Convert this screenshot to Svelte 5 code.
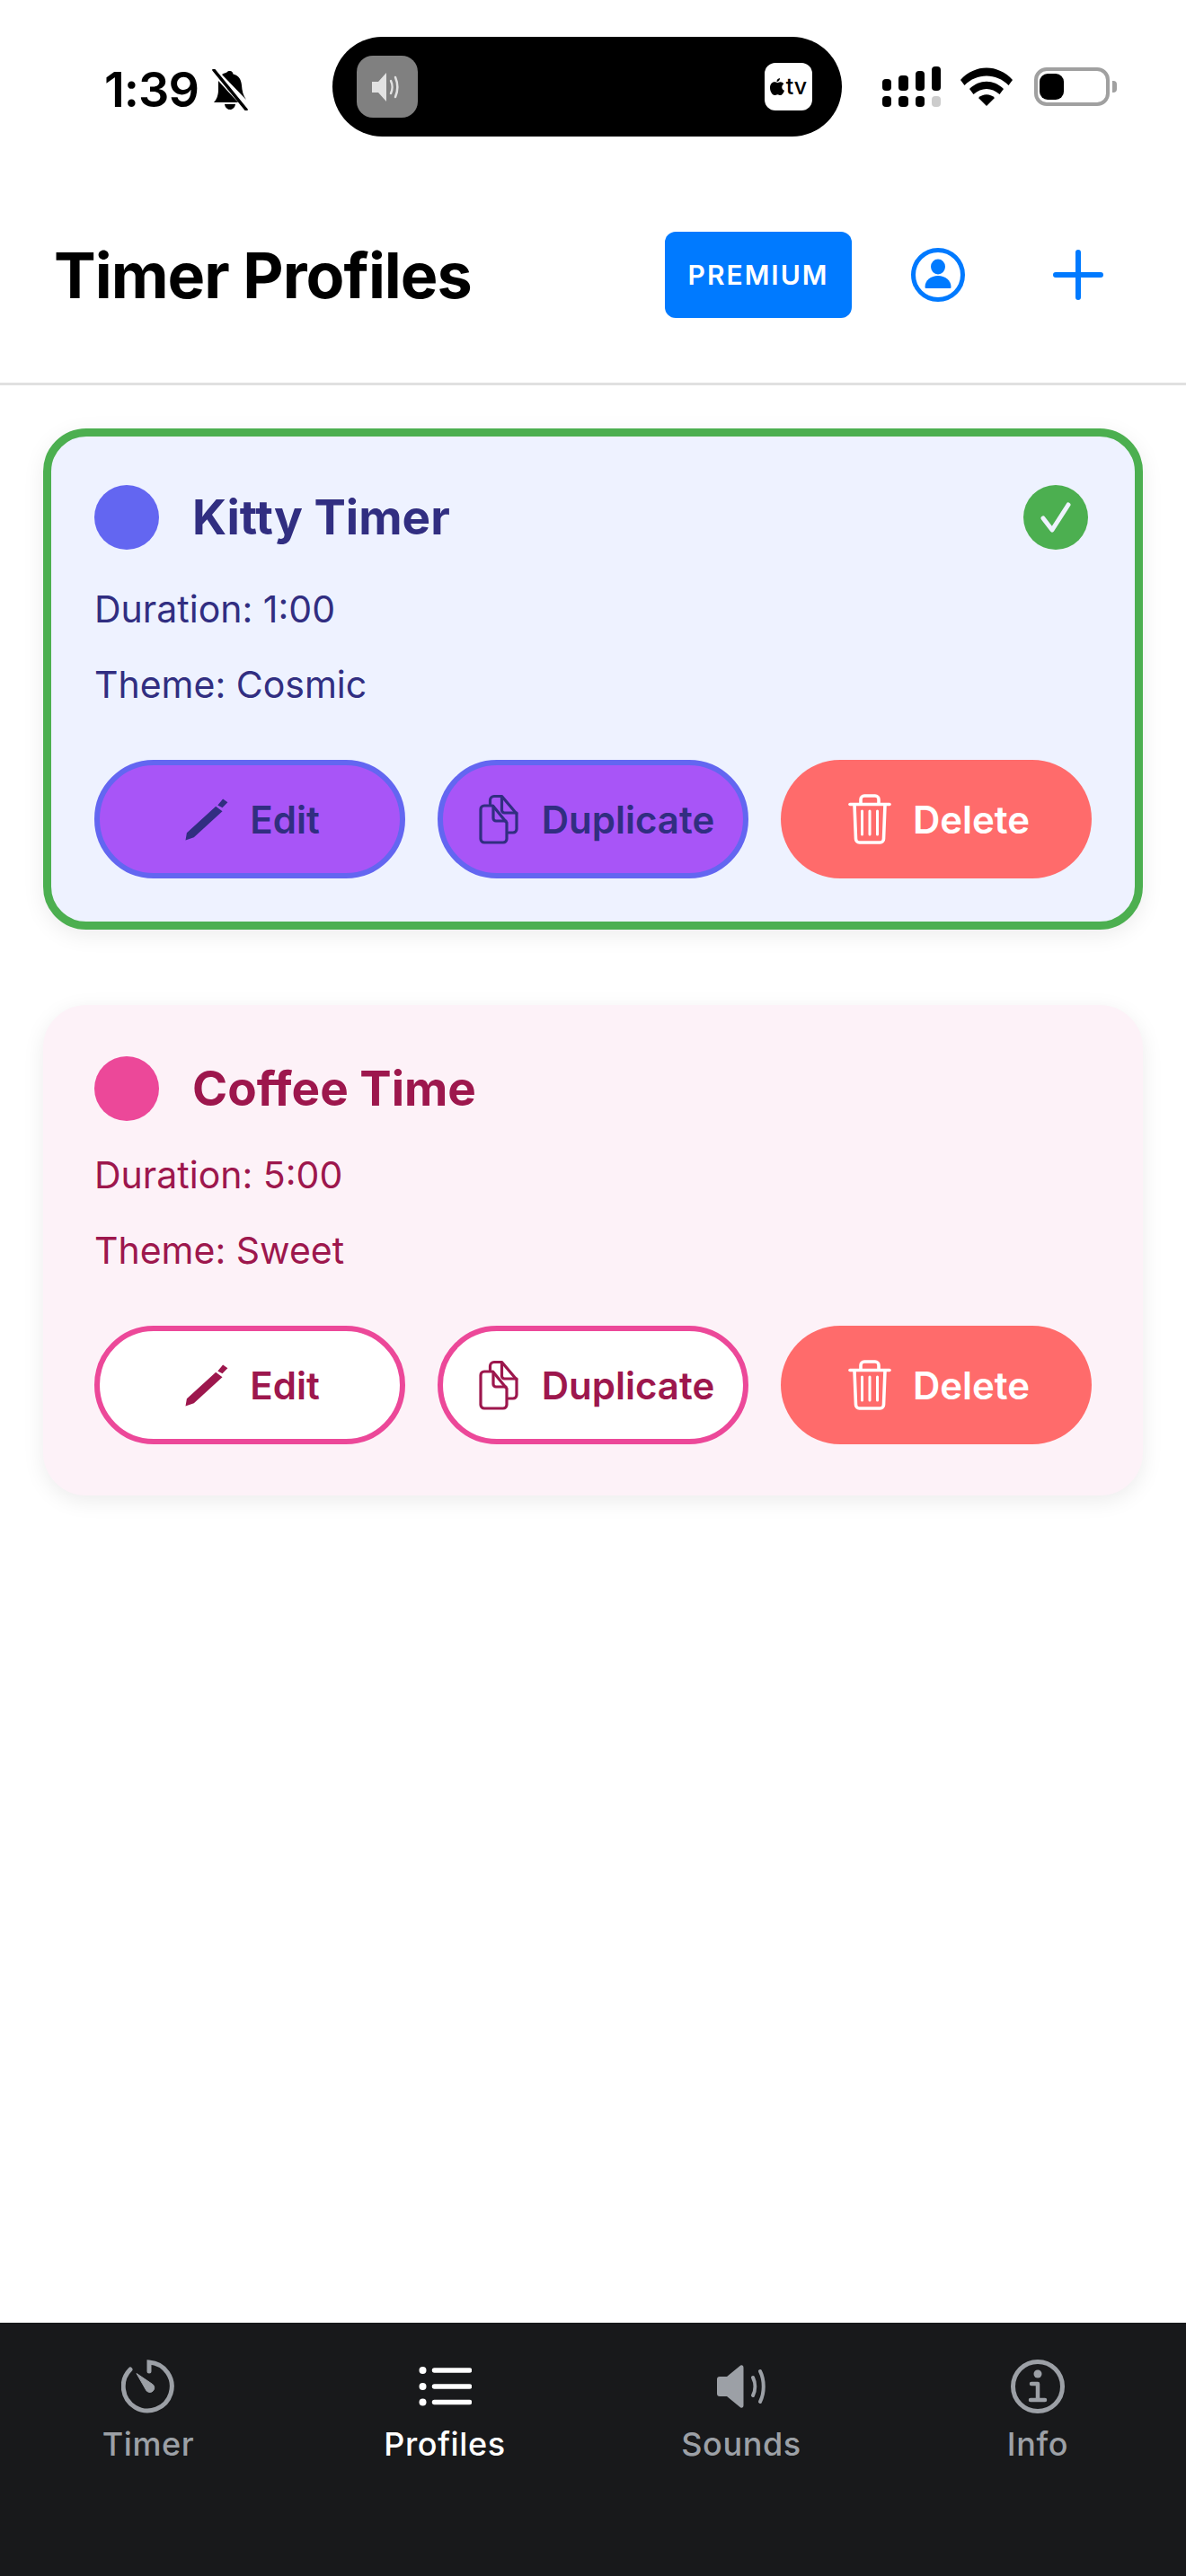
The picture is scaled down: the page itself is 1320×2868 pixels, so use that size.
<script>
  const profiles = [
    { name: 'Kitty Timer', duration: '1:00', theme: 'Cosmic', cls: 'cosmic', active: true },
    { name: 'Coffee Time', duration: '5:00', theme: 'Sweet', cls: 'sweet', active: false }
  ];
</script>

<div class="screen">
  <div class="status">
    <div class="left">
      <span class="time">1:39</span>
      <svg class="bell" width="42" height="46" viewBox="0 0 42 46">
        <path d="M21 2c2 0 3 1.500 3.500 3.500C31 7 33.500 12 34 18c.4 6 1.500 11 5 16L12 6c2-1.500 4-2 5.500-2.500C18 2.500 19 2 21 2zM8 13l22 24H3c3-3 5-8 5-14zM15 39h12c-.5 3.500-3 6-6 6s-5.500-2.500-6-6z" fill="#000"/>
        <path d="M3 1l36 44" stroke="#000" stroke-width="3.500" stroke-linecap="round"/>
      </svg>
    </div>
    <div class="island">
      <div class="tile-sound">
        <svg width="40" height="40" viewBox="0 0 40 40">
          <path d="M3 14h7l9-10v32l-9-10H3z" fill="#e2e2e2"/>
          <path d="M24 13c2 4 2 10 0 14M29 9c3 7 3 15 0 22" fill="none" stroke="#e2e2e2" stroke-width="2.500" stroke-linecap="round"/>
        </svg>
      </div>
      <div class="tile-tv">
        <svg width="16" height="20" viewBox="0 0 16 20">
          <path d="M11 0c.2 2-1.500 4-3.500 4C7.300 2 9 .3 11 0zM8 5c1 0 2-.8 3.500-.8 1.500 0 3 .8 3.800 2.200-3 2-2.500 6 .7 7.300-.8 2.500-2.500 5.300-4.300 5.300-1.300 0-1.800-.8-3.300-.8s-2 .8-3.300.8C2.500 19 0 14.500 0 10.700 0 7 2.300 4.300 5 4.300 6.300 4.300 7.200 5 8 5z" fill="#000"/>
        </svg>
        <span class="tv">tv</span>
      </div>
    </div>
    <div class="right">
      <div class="signal">
        <div class="bar"><i class="b1"></i><i class="dot"></i></div>
        <div class="bar"><i class="b2"></i><i class="dot"></i></div>
        <div class="bar"><i class="b3"></i><i class="dot"></i></div>
        <div class="bar"><i class="b4"></i><i class="dot off"></i></div>
      </div>
      <svg class="wifi" width="58" height="43" viewBox="0 0 58 43">
        <path d="M0 14C16-4 42-4 58 14l-4.500 6C40 6 18 6 4.500 20z" fill="#000"/>
        <path d="M10 24c11-11 27-11 38 0l-4.500 6c-9-8-20-8-29 0z" fill="#000"/>
        <path d="M20 34c5-5 13-5 18 0l-9 9z" fill="#000"/>
      </svg>
      <div class="battery"><div class="level"></div></div>
      <div class="cap"></div>
    </div>
  </div>

  <header class="header">
    <h1>Timer Profiles</h1>
    <div class="actions">
      <button class="premium">PREMIUM</button>
      <svg class="profile" width="60" height="60" viewBox="0 0 60 60">
        <circle cx="30" cy="30" r="27.500" fill="none" stroke="#007aff" stroke-width="5"/>
        <ellipse cx="30" cy="21" rx="8" ry="8.500" fill="#007aff"/>
        <path d="M15.500 43.500C15.500 36 22 31 30 31s14.500 5 14.500 12.500c0 1-.5 1.500-1.500 1.500H17c-1 0-1.500-.5-1.500-1.500z" fill="#007aff"/>
      </svg>
      <svg class="plus" width="56" height="56" viewBox="0 0 56 56">
        <path d="M28 3v50M3 28h50" stroke="#007aff" stroke-width="6" stroke-linecap="round"/>
      </svg>
    </div>
  </header>

  <main class="list">
    {#each profiles as p}
      <section class="card {p.cls}" class:active={p.active}>
        <div class="title-row">
          <span class="swatch"></span>
          <h2>{p.name}</h2>
          {#if p.active}
            <svg class="check" width="72" height="72" viewBox="0 0 72 72">
              <circle cx="36" cy="36" r="36" fill="#4caf50"/>
              <path d="M22 37l10 13 18-28" fill="none" stroke="#eef2ff" stroke-width="5" stroke-linecap="round" stroke-linejoin="round"/>
            </svg>
          {/if}
        </div>
        <p>Duration: {p.duration}</p>
        <p>Theme: {p.theme}</p>
        <div class="buttons">
          <button class="btn ghost">
            <svg width="60" height="60" viewBox="0 0 60 60">
              <path d="M6.500 53.500L7.900 45.200 40.200 15.800 47.500 21.200 15.800 50.200z M48.100 7.500L53.400 11.200 47.500 17.200 42.300 14.500z" fill="currentColor"/>
            </svg>
            Edit
          </button>
          <button class="btn ghost">
            <svg width="60" height="60" viewBox="0 0 60 60" fill="none" stroke="currentColor" stroke-width="3.200" stroke-linejoin="round" stroke-linecap="round">
              <path d="M20.500 13V9a4.500 4.500 0 0 1 4.500-4.500h8.500L50 24v17a4 4 0 0 1-4 4h-5"/>
              <path d="M33.500 5v15a3 3 0 0 0 3 3H50"/>
              <path d="M14 15h9.500L39 34v18a4 4 0 0 1-4 4H14a4 4 0 0 1-4-4V19a4 4 0 0 1 4-4z"/>
              <path d="M24 16v13a3 3 0 0 0 3 3h11"/>
            </svg>
            Duplicate
          </button>
          <button class="btn danger">
            <svg width="60" height="60" viewBox="0 0 60 60" fill="none" stroke="currentColor" stroke-width="3.600" stroke-linecap="round" stroke-linejoin="round">
              <path d="M8 13.500h44"/>
              <path d="M20 13V8a4 4 0 0 1 4-4h12a4 4 0 0 1 4 4v5"/>
              <path d="M13 14l1.500 38a4 4 0 0 0 4 4h23a4 4 0 0 0 4-4L47 14"/>
              <path d="M21.500 21v26M30 21v26M38.500 21v26" stroke-width="3"/>
            </svg>
            Delete
          </button>
        </div>
      </section>
    {/each}
  </main>

  <nav class="tabs">
    <div class="tab">
      <svg width="60" height="60" viewBox="0 0 60 60">
        <path d="M31 13V3a27 27 0 1 1-21 8" fill="none" stroke="currentColor" stroke-width="5" stroke-linecap="round"/>
        <path d="M17 15.500L34 27a5 5 0 1 1-7 6z" fill="currentColor" stroke="currentColor" stroke-width="1" stroke-linejoin="round"/>
      </svg>
      <span>Timer</span>
    </div>
    <div class="tab on">
      <svg width="60" height="60" viewBox="0 0 60 60">
        <circle cx="5.500" cy="12" r="4" fill="currentColor"/>
        <circle cx="5.500" cy="30" r="4" fill="currentColor"/>
        <circle cx="5.500" cy="47.500" r="4" fill="currentColor"/>
        <path d="M18.500 12H57.500M18.500 30H57.500M18.500 47.500H57.500" stroke="currentColor" stroke-width="5.500" stroke-linecap="round"/>
      </svg>
      <span>Profiles</span>
    </div>
    <div class="tab">
      <svg width="60" height="60" viewBox="0 0 60 60">
        <path d="M6 19h8L28 7.500c2-2 4.500-1.500 4.500 1.500v42c0 3-2.500 3.500-4.500 1.500L14 41H6a3 3 0 0 1-3-3V22a3 3 0 0 1 3-3z" fill="currentColor"/>
        <path d="M43 20c3 6 3 14 0 20M51 13c5 10 5 24 0 34" fill="none" stroke="currentColor" stroke-width="4" stroke-linecap="round"/>
      </svg>
      <span>Sounds</span>
    </div>
    <div class="tab">
      <svg width="60" height="60" viewBox="0 0 60 60">
        <circle cx="30" cy="30" r="27.500" fill="none" stroke="currentColor" stroke-width="5"/>
        <circle cx="30" cy="16" r="4.500" fill="currentColor"/>
        <path d="M23 27h7v18M22 45h16" fill="none" stroke="currentColor" stroke-width="4.500" stroke-linecap="round" stroke-linejoin="round"/>
      </svg>
      <span>Info</span>
    </div>
  </nav>
</div>

<style>
  :global(body) {
    margin: 0;
    background: #fff;
  }
  .screen {
    width: 1320px;
    height: 2868px;
    display: flex;
    flex-direction: column;
    font-family: Inter, "Liberation Sans", sans-serif;
    background: #fff;
    overflow: hidden;
  }
  .status {
    height: 190px;
    flex: none;
    display: flex;
    align-items: flex-start;
    box-sizing: border-box;
    padding-top: 41px;
  }
  .left {
    width: 370px;
    box-sizing: border-box;
    padding: 59px 0 0 116px;
    display: flex;
    align-items: center;
    gap: 14px;
    height: 50px;
  }
  .time {
    font-size: 54px;
    font-weight: 600;
    line-height: 50px;
    color: #000;
    letter-spacing: -1px;
  }
  .bell {
    flex: none;
    margin-top: -1px;
  }
  .island {
    width: 567px;
    height: 111px;
    background: #000;
    border-radius: 56px;
    flex: none;
    display: flex;
    align-items: center;
    justify-content: space-between;
    padding: 0 33px 0 27px;
    box-sizing: border-box;
  }
  .tile-sound {
    width: 68px;
    height: 69px;
    border-radius: 18px;
    background: #808080;
    display: flex;
    align-items: center;
    justify-content: center;
  }
  .tile-tv {
    width: 53px;
    height: 53px;
    border-radius: 12px;
    background: #fff;
    display: flex;
    align-items: center;
    justify-content: center;
    gap: 2px;
  }
  .tv {
    font-size: 25px;
    font-weight: 500;
    color: #000;
    line-height: 1;
  }
  .right {
    margin-left: 45px;
    padding-top: 33px;
    display: flex;
    align-items: flex-start;
  }
  .signal {
    display: flex;
    gap: 8px;
    width: 65px;
    height: 45px;
  }
  .bar {
    width: 10.500px;
    height: 45px;
    display: flex;
    flex-direction: column;
    justify-content: flex-end;
    gap: 6.500px;
  }
  .bar i {
    display: block;
    background: #000;
    border-radius: 4px;
  }
  .b1 { height: 13px; }
  .b2 { height: 17px; }
  .b3 { height: 22px; }
  .b4 { height: 27px; }
  .bar .dot { height: 12px; }
  .bar .off { background: #ccc; }
  .wifi {
    margin-left: 22px;
    margin-top: 1px;
  }
  .battery {
    margin-left: 24px;
    margin-top: 1px;
    width: 84px;
    height: 43px;
    box-sizing: border-box;
    border: 4px solid #a0a0a0;
    border-radius: 14px;
    padding: 3px 2px;
  }
  .level {
    width: 27px;
    height: 29px;
    background: #000;
    border-radius: 9px;
  }
  .cap {
    width: 5px;
    height: 13px;
    margin: 16px 0 0 3px;
    background: #a0a0a0;
    border-radius: 0 4px 4px 0;
  }
  .header {
    flex: none;
    height: 239px;
    box-sizing: border-box;
    border-bottom: 3px solid #e0e0e0;
    padding: 0 48px 4px 60px;
    display: flex;
    align-items: center;
    justify-content: space-between;
  }
  h1 {
    margin: 0;
    font-size: 70px;
    font-weight: 700;
    color: #000;
    letter-spacing: -1px;
  }
  .actions {
    display: flex;
    align-items: center;
  }
  .premium {
    width: 208px;
    height: 96px;
    background: #007aff;
    color: #fff;
    border: none;
    border-radius: 12px;
    font: 600 30px Inter, "Liberation Sans", sans-serif;
    letter-spacing: 2px;
    padding: 0;
  }
  .profile {
    margin-left: 66px;
  }
  .plus {
    margin-left: 98px;
    margin-right: 44px;
  }
  .list {
    flex: 1;
    padding: 48px 48px 0;
    display: flex;
    flex-direction: column;
    gap: 84px;
  }
  .card {
    box-sizing: border-box;
    border: 9px solid transparent;
    border-radius: 48px;
    padding: 48px;
    box-shadow: 0 6px 24px rgba(0, 0, 0, 0.08);
  }
  .cosmic {
    background: #eef2ff;
    color: #312e81;
  }
  .sweet {
    background: #fdf2f8;
    color: #9d174d;
    border-color: #fdf2f8;
  }
  .active {
    border-color: #4caf50;
  }
  .title-row {
    display: flex;
    align-items: center;
    gap: 37px;
    min-height: 72px;
    margin-bottom: 30px;
  }
  .active .title-row {
    min-height: 84px;
  }
  .swatch {
    width: 72px;
    height: 72px;
    border-radius: 50%;
    flex: none;
  }
  .cosmic .swatch { background: #6366f1; }
  .sweet .swatch { background: #ec4899; }
  h2 {
    margin: 0;
    flex: 1;
    font-size: 53px;
    font-weight: 700;
    line-height: 72px;
  }
  .check {
    flex: none;
    margin-right: 4px;
  }
  p {
    margin: 0 0 24px;
    font-size: 41px;
    font-weight: 400;
    line-height: 60px;
  }
  .buttons {
    display: grid;
    grid-template-columns: repeat(3, 1fr);
    gap: 36px;
    margin-top: 54px;
  }
  .btn {
    height: 132px;
    box-sizing: border-box;
    border: 6px solid transparent;
    border-radius: 66px;
    padding: 0;
    display: flex;
    align-items: center;
    justify-content: center;
    gap: 18px;
    font: 600 42px Inter, "Liberation Sans", sans-serif;
  }
  .btn svg {
    flex: none;
  }
  .cosmic .ghost {
    background: #a855f7;
    border-color: #6366f1;
    color: #312e81;
  }
  .sweet .ghost {
    background: #fff;
    border-color: #ec4899;
    color: #9d174d;
  }
  .danger {
    background: #ff6b6b;
    color: #fff;
  }
  .tabs {
    flex: none;
    height: 282px;
    background: #18191b;
    display: grid;
    grid-template-columns: repeat(4, 1fr);
    box-sizing: border-box;
    padding-top: 41px;
  }
  .tab {
    display: flex;
    flex-direction: column;
    align-items: center;
    color: #9ca0a6;
    font-size: 36px;
    font-weight: 500;
    letter-spacing: 0.6px;
  }
  .tab.on {
    color: #fff;
  }
  .tab span {
    margin-top: 12px;
    line-height: 44px;
  }
</style>
